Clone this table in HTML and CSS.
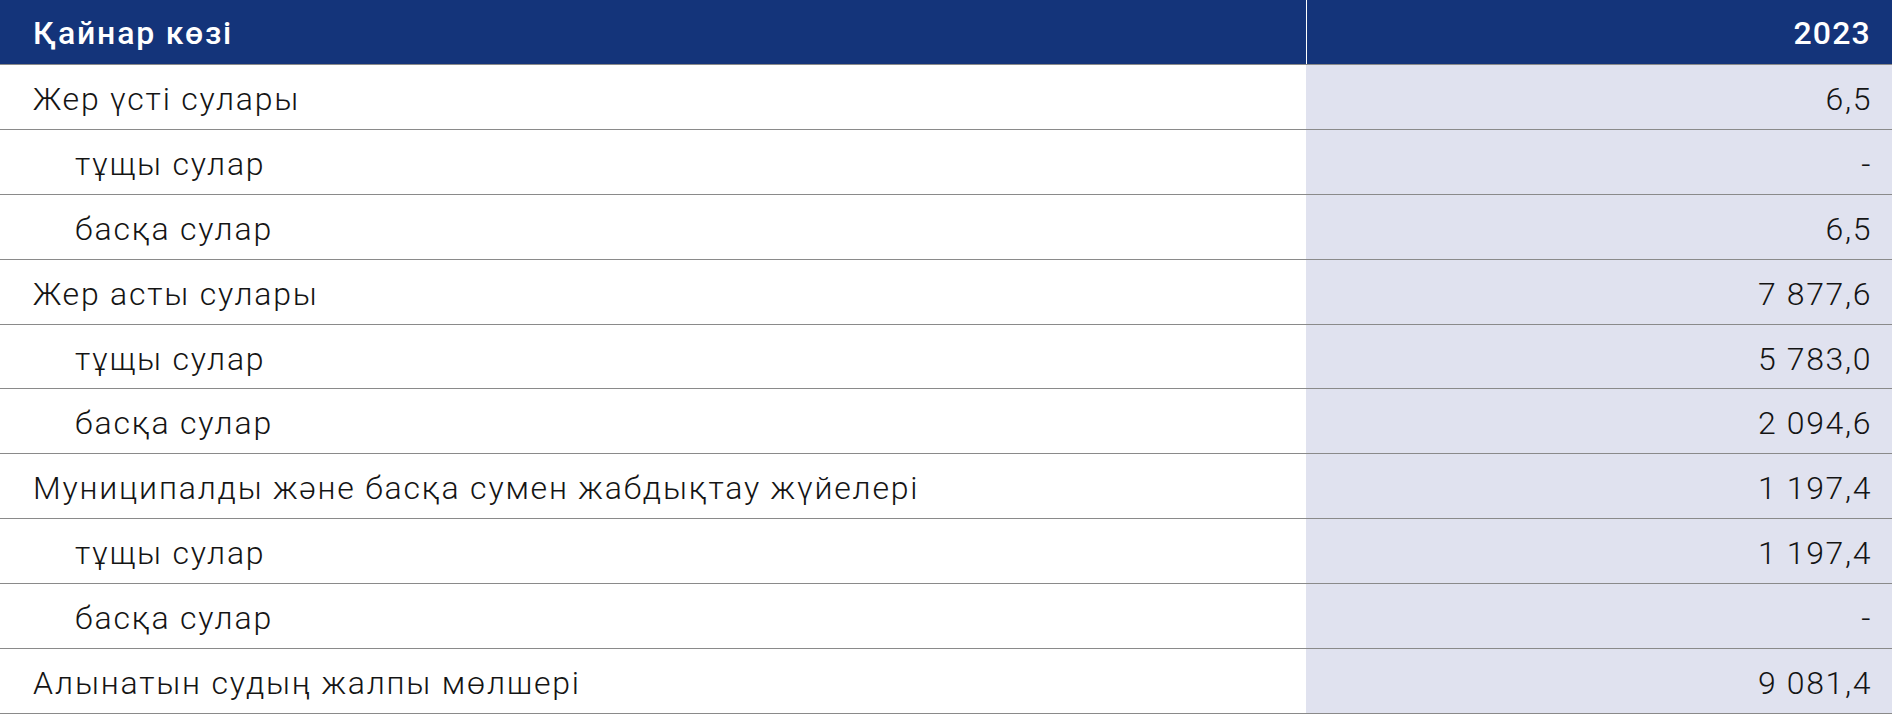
FILE: index.html
```html
<!DOCTYPE html>
<html lang="kk">
<head>
<meta charset="utf-8">
<link rel="stylesheet" href="styles.css">
</head>
<body>
<div class="table">
  <div class="row head">
    <div class="cell label">Қайнар көзі</div>
    <div class="cell value">2023</div>
  </div>
  <div class="row"><div class="cell label">Жер үсті сулары</div><div class="cell value">6,5</div></div>
  <div class="row"><div class="cell label sub">тұщы сулар</div><div class="cell value">-</div></div>
  <div class="row"><div class="cell label sub">басқа сулар</div><div class="cell value">6,5</div></div>
  <div class="row"><div class="cell label">Жер асты сулары</div><div class="cell value">7 877,6</div></div>
  <div class="row"><div class="cell label sub">тұщы сулар</div><div class="cell value">5 783,0</div></div>
  <div class="row"><div class="cell label sub">басқа сулар</div><div class="cell value">2 094,6</div></div>
  <div class="row"><div class="cell label">Муниципалды және басқа сумен жабдықтау жүйелері</div><div class="cell value">1 197,4</div></div>
  <div class="row"><div class="cell label sub">тұщы сулар</div><div class="cell value">1 197,4</div></div>
  <div class="row"><div class="cell label sub">басқа сулар</div><div class="cell value">-</div></div>
  <div class="row"><div class="cell label">Алынатын судың жалпы мөлшері</div><div class="cell value">9 081,4</div></div>
</div>
</body>
</html>
```
FILE: styles.css
```css
html, body {
  margin: 0;
  padding: 0;
  background: #ffffff;
}
body {
  font-family: Roboto, "Liberation Sans", sans-serif;
  color: #141414;
}
.table {
  width: 1892px;
  display: flex;
  flex-direction: column;
}
.row {
  display: grid;
  grid-template-columns: 1306px 1fr;
  height: 64.9px;
  flex-shrink: 0;
  box-sizing: border-box;
  border-bottom: 1px solid #8a8a8a;
}
.row.head {
  height: 65px;
  background: #14347a;
  color: #ffffff;
}
.cell {
  display: flex;
  align-items: center;
  font-size: 32px;
  font-weight: 300;
  white-space: nowrap;
  padding-top: 4px;
  box-sizing: border-box;
}
.label {
  padding-left: 33px;
  letter-spacing: 1.8px;
}
.label.sub {
  padding-left: 75px;
}
.value {
  justify-content: flex-end;
  padding-right: 20px;
  letter-spacing: 1.6px;
  background: #e0e2ef;
}
.head .cell {
  font-weight: 500;
  padding-top: 2px;
  background: transparent;
}
.head .value {
  letter-spacing: 1.2px;
  padding-right: 21px;
  border-left: 1px solid #ffffff;
}
```
